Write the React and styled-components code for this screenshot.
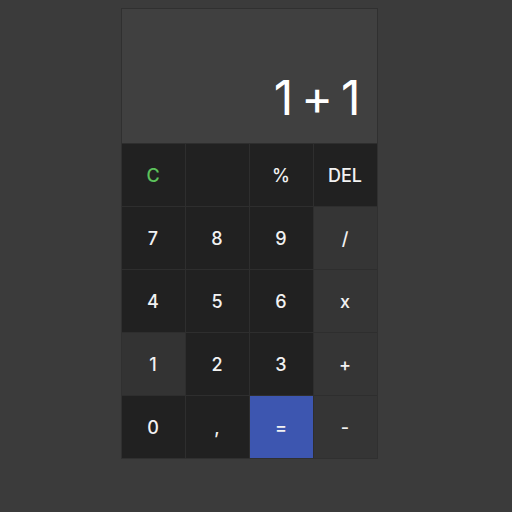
import React from 'react';
import styled, { createGlobalStyle } from 'styled-components';

const GlobalStyle = createGlobalStyle`
  body {
    margin: 0;
    background: #3b3b3b;
    font-family: Inter, 'Noto Sans', sans-serif;
  }
`;

const Page = styled.div`
  display: flex;
  justify-content: center;
  padding: 8px 14px 0 0;
`;

const Calculator = styled.div`
  width: 255px;
  border: 1px solid #303030;
  background: #2e2e2e;
  display: flex;
  flex-direction: column;
  gap: 1px;
`;

const Display = styled.div`
  height: 134px;
  background: #404040;
  display: flex;
  align-items: flex-end;
  justify-content: flex-end;
  padding: 0 8px 16px;
  box-sizing: border-box;
  color: #fff;
  font-size: 48px;
  font-weight: 400;
  letter-spacing: 8px;
`;

const Keys = styled.div`
  display: grid;
  grid-template-columns: repeat(4, 63px);
  grid-auto-rows: 62px;
  gap: 1px;
`;

const bgFor = {
  num: '#212121',
  op: '#353535',
  light: '#333333',
  equal: '#3d56b0',
};

const Key = styled.button`
  border: none;
  margin: 0;
  padding: 0;
  background: ${(p) => bgFor[p.$kind || 'num']};
  color: ${(p) => (p.$green ? '#5cc25c' : '#f2f2f2')};
  font-family: inherit;
  font-size: 18px;
  font-weight: 500;
  cursor: pointer;
`;

const keys = [
  { label: 'C', green: true },
  { label: '' },
  { label: '%' },
  { label: 'DEL' },
  { label: '7' },
  { label: '8' },
  { label: '9' },
  { label: '/', kind: 'op' },
  { label: '4' },
  { label: '5' },
  { label: '6' },
  { label: 'x', kind: 'op' },
  { label: '1', kind: 'light' },
  { label: '2' },
  { label: '3' },
  { label: '+', kind: 'op' },
  { label: '0' },
  { label: ',' },
  { label: '=', kind: 'equal' },
  { label: '-', kind: 'op' },
];

const App = () => {
  return (
    <>
      <GlobalStyle />
      <Page>
        <Calculator>
          <Display>1+1</Display>
          <Keys>
            {keys.map((k, i) => (
              <Key key={i} $kind={k.kind} $green={k.green}>
                {k.label}
              </Key>
            ))}
          </Keys>
        </Calculator>
      </Page>
    </>
  );
};

export default App;
